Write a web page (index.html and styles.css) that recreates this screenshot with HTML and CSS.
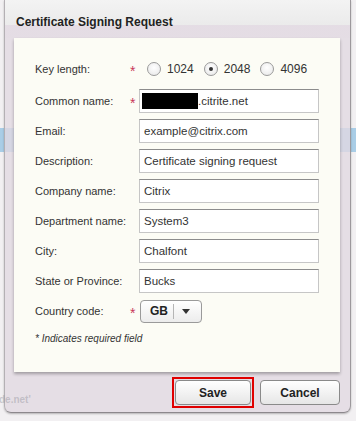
FILE: index.html
```html
<!DOCTYPE html>
<html lang="en">
<head>
  <meta charset="UTF-8">
  <title>Certificate Signing Request</title>
  <link rel="stylesheet" href="styles.css">
</head>
<body>

  <div class="dialog">
    <div class="dialog-title">Certificate Signing Request</div>

    <div class="panel">
      <form class="csr-form">

        <label>Key length:</label>
        <span class="req">*</span>
        <div class="radios">
          <label class="radio"><input type="radio" name="keylen" value="1024"> 1024</label>
          <label class="radio"><input type="radio" name="keylen" value="2048" checked> 2048</label>
          <label class="radio"><input type="radio" name="keylen" value="4096"> 4096</label>
        </div>

        <label for="cn">Common name:</label>
        <span class="req">*</span>
        <div class="field"><span class="redacted"></span>.citrite.net</div>

        <label for="email">Email:</label>
        <span></span>
        <input type="text" id="email" value="example@citrix.com">

        <label for="desc">Description:</label>
        <span></span>
        <input type="text" id="desc" value="Certificate signing request">

        <label for="company">Company name:</label>
        <span></span>
        <input type="text" id="company" value="Citrix">

        <label for="dept">Department name:</label>
        <span></span>
        <input type="text" id="dept" value="System3">

        <label for="city">City:</label>
        <span></span>
        <input type="text" id="city" value="Chalfont">

        <label for="state">State or Province:</label>
        <span></span>
        <input type="text" id="state" value="Bucks">

        <label>Country code:</label>
        <span class="req">*</span>
        <div class="select">
          <span class="select-value">GB</span>
          <span class="select-arrow"></span>
        </div>

      </form>
      <p class="note">* Indicates required field</p>
    </div>

    <div class="dialog-footer">
      <span class="behind-text">de.net'</span>
      <span class="focus-ring"><button type="button" class="btn btn-save">Save</button></span>
      <button type="button" class="btn">Cancel</button>
    </div>
  </div>

</body>
</html>
```

FILE: styles.css
```css
html, body {
  margin: 0;
  height: 100%;
}
body {
  font-family: "Liberation Sans", Arial, sans-serif;
  font-size: 12px;
  color: #333;
  background: linear-gradient(to bottom, #f2f0f2 0, #f2f0f2 128px, #a9cde6 128px, #a9cde6 152px, #f2f0f2 152px);
}
.dialog {
  margin: 0 5px 0 4px;
  height: 412px;
  border-left: 1px solid #b4b0b4;
  border-right: 1px solid #9c989c;
  border-bottom: 1px solid #8c888c;
  border-radius: 0 0 7px 7px;
  background: rgba(226, 216, 226, 0.78);
  display: flex;
  flex-direction: column;
  box-shadow: 0 1px 2px rgba(0, 0, 0, 0.25);
}
.dialog-title {
  height: 38px;
  box-sizing: border-box;
  padding: 15px 0 0 11px;
  font-weight: bold;
  font-size: 12px;
  color: #222;
  background: linear-gradient(to bottom, #f3f3f3 0, #ebebeb 25px, rgba(228, 220, 228, 0.6) 25px);
}
.panel {
  margin: 0 10px 0 9px;
  height: 334px;
  box-sizing: border-box;
  padding: 17px 0 0 21px;
  background: #fcfcf5;
  box-shadow: 0 2px 3px rgba(0, 0, 0, 0.3);
}
.csr-form {
  display: grid;
  grid-template-columns: 95px 9px 180px;
  grid-template-rows: 28px;
  grid-auto-rows: 24px;
  row-gap: 6px;
  align-items: center;
}
.csr-form > label {
  font-size: 11px;
  white-space: nowrap;
  color: #333;
}
.req {
  color: #c8385a;
  font-size: 14px;
  line-height: 14px;
  padding-top: 3px;
}
.radios {
  display: flex;
  gap: 10px;
  margin-left: 8px;
}
.radio {
  display: flex;
  align-items: center;
  gap: 6px;
  font-size: 12px;
  color: #333;
}
.radio input {
  appearance: none;
  width: 14px;
  height: 14px;
  margin: 0;
  border: 1px solid #9a9a9a;
  border-radius: 50%;
  background: radial-gradient(circle at 50% 40%, #ffffff, #e6e6e6);
  position: relative;
}
.radio input:checked::after {
  content: "";
  position: absolute;
  left: 4px;
  top: 4px;
  width: 4px;
  height: 4px;
  border-radius: 50%;
  background: #333;
}
.csr-form input[type="text"],
.field {
  height: 24px;
  box-sizing: border-box;
  margin: 0;
  padding: 0 4px;
  border: 1px solid #c6c6c6;
  border-top-color: #8c8c8c;
  background: #fff;
  font-family: "Liberation Sans", Arial, sans-serif;
  font-size: 11.5px;
  color: #333;
}
.field {
  display: flex;
  align-items: center;
  padding-left: 2px;
}
.redacted {
  display: inline-block;
  width: 56px;
  height: 16px;
  background: #000;
}
.select {
  width: 62px;
  height: 23px;
  box-sizing: border-box;
  margin-left: 1px;
  border: 1px solid #9a9a9a;
  border-radius: 4px;
  background: linear-gradient(to bottom, #ffffff, #ececec);
  display: flex;
  align-items: center;
}
.select-value {
  width: 33px;
  padding-left: 9px;
  box-sizing: border-box;
  font-weight: bold;
  color: #222;
  border-right: 1px solid #b5b5b5;
  height: 15px;
  line-height: 15px;
}
.select-arrow {
  margin-left: 8px;
  width: 0;
  height: 0;
  border-left: 4px solid transparent;
  border-right: 4px solid transparent;
  border-top: 5px solid #333;
}
.note {
  margin: 10px 0 0;
  font-size: 10px;
  font-style: italic;
  color: #333;
}
.dialog-footer {
  flex: 1;
  display: flex;
  align-items: center;
  justify-content: flex-end;
  gap: 6px;
  padding: 1px 10px 0 0;
  position: relative;
}
.behind-text {
  position: absolute;
  left: -6px;
  top: 22px;
  font-size: 10px;
  font-weight: bold;
  color: rgba(150, 150, 160, 0.45);
}
.focus-ring {
  display: flex;
  padding: 1px;
  border: 2px solid #e00000;
}
.btn {
  height: 25px;
  width: 80px;
  border: 1px solid #8a8a8a;
  border-radius: 4px;
  background: linear-gradient(to bottom, #ffffff, #e6e6e6);
  font-family: "Liberation Sans", Arial, sans-serif;
  font-size: 12px;
  font-weight: bold;
  color: #222;
}
.btn-save {
  width: 76px;
}
```
